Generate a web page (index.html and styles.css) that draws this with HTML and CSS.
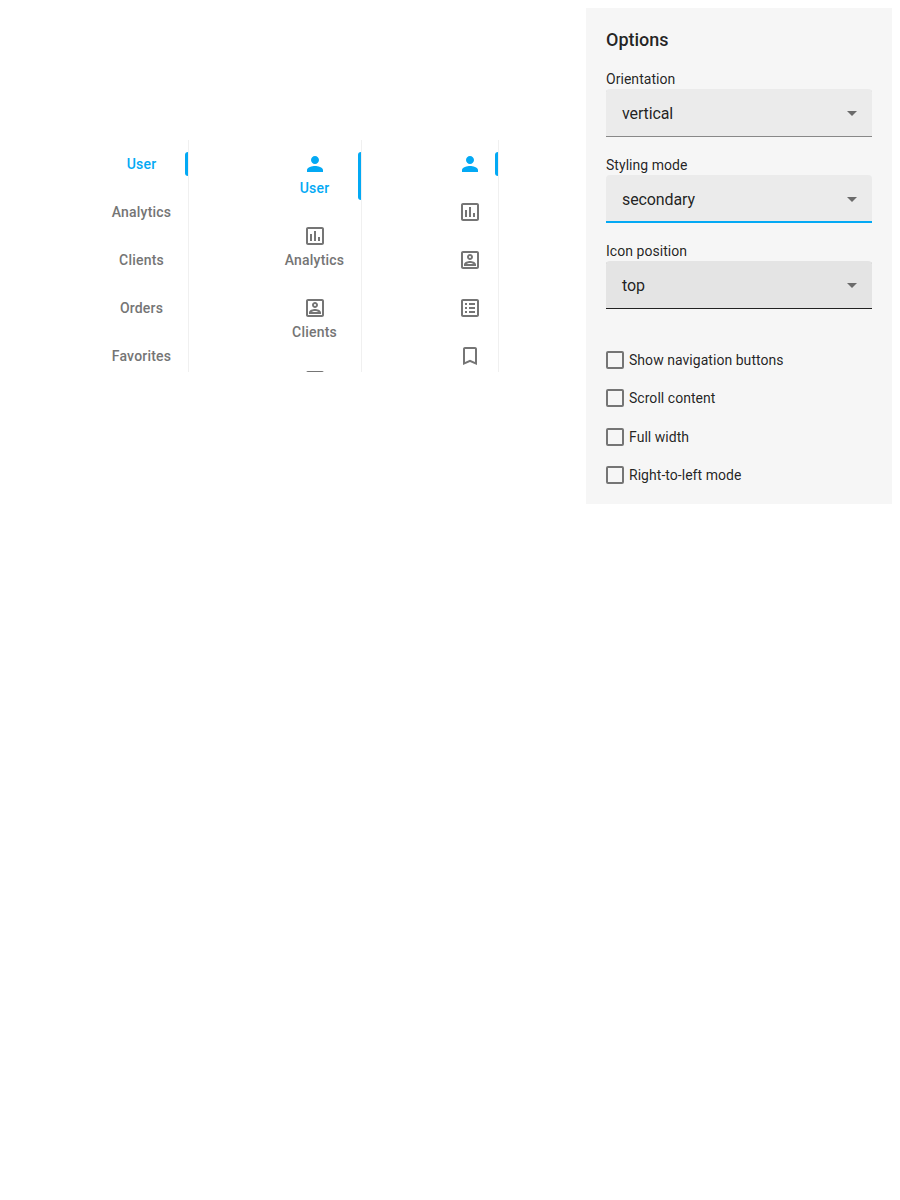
FILE: index.html
```html
<!DOCTYPE html>
<html lang="en">
<head>
<meta charset="utf-8">
<title>Tabs</title>
<link rel="stylesheet" href="styles.css">
</head>
<body>
<svg class="defs" width="0" height="0">
  <symbol id="user" viewBox="0 0 24 24"><path d="M12 12c2.21 0 4-1.79 4-4s-1.79-4-4-4-4 1.79-4 4 1.79 4 4 4zm0 2c-2.67 0-8 1.34-8 4v2h16v-2c0-2.66-5.33-4-8-4z"/></symbol>
  <symbol id="chart" viewBox="0 0 24 24"><path d="M19 3H5c-1.100 0-2 .9-2 2v14c0 1.100.9 2 2 2h14c1.100 0 2-.9 2-2V5c0-1.100-.9-2-2-2zm0 16H5V5h14v14zM7 10h2v7H7zm4-3h2v10h-2zm4 6h2v4h-2z"/></symbol>
  <symbol id="clients" viewBox="0 0 24 24"><path d="M19 3H5c-1.100 0-2 .9-2 2v14c0 1.100.9 2 2 2h14c1.100 0 2-.9 2-2V5c0-1.100-.9-2-2-2zm0 16H5V5h14v14zM12 12c1.650 0 3-1.350 3-3s-1.350-3-3-3-3 1.350-3 3 1.350 3 3 3zm0-4c.55 0 1 .45 1 1s-.45 1-1 1-1-.45-1-1 .45-1 1-1zM18 16.580c0-2.500-3.970-3.580-6-3.580s-6 1.080-6 3.580V18h12v-1.420zM8.480 16c.74-.51 2.230-1 3.520-1s2.780.49 3.520 1H8.480z"/></symbol>
  <symbol id="orders" viewBox="0 0 24 24"><path d="M19 3H5c-1.100 0-2 .9-2 2v14c0 1.100.9 2 2 2h14c1.100 0 2-.9 2-2V5c0-1.100-.9-2-2-2zm0 16H5V5h14v14zM11 7h6v2h-6zm0 4h6v2h-6zm0 4h6v2h-6zM7 7h2v2H7zm0 4h2v2H7zm0 4h2v2H7z"/></symbol>
  <symbol id="bookmark" viewBox="0 0 24 24"><path d="M17 3H7c-1.100 0-2 .9-2 2v16l7-3 7 3V5c0-1.100-.9-2-2-2zm0 15l-5-2.180L7 18V5h10v13z"/></symbol>
</svg>
<main class="demo">
  <div class="tabs tabs-text">
    <div class="tab selected"><span>User</span></div>
    <div class="tab"><span>Analytics</span></div>
    <div class="tab"><span>Clients</span></div>
    <div class="tab"><span>Orders</span></div>
    <div class="tab"><span>Favorites</span></div>
  </div>
  <div class="tabs tabs-both">
    <div class="tab selected"><svg class="icon"><use href="#user"/></svg><span>User</span></div>
    <div class="tab"><svg class="icon"><use href="#chart"/></svg><span>Analytics</span></div>
    <div class="tab"><svg class="icon"><use href="#clients"/></svg><span>Clients</span></div>
    <div class="tab"><svg class="icon"><use href="#orders"/></svg></div>
  </div>
  <div class="tabs tabs-icon">
    <div class="tab selected"><svg class="icon"><use href="#user"/></svg></div>
    <div class="tab"><svg class="icon"><use href="#chart"/></svg></div>
    <div class="tab"><svg class="icon"><use href="#clients"/></svg></div>
    <div class="tab"><svg class="icon"><use href="#orders"/></svg></div>
    <div class="tab"><svg class="icon"><use href="#bookmark"/></svg></div>
  </div>
</main>
<aside class="options">
  <div class="caption">Options</div>
  <div class="option">
    <div class="label">Orientation</div>
    <div class="select"><span>vertical</span><svg class="arrow" viewBox="0 0 10 5"><path d="M0 0h10L5 5z"/></svg></div>
  </div>
  <div class="option">
    <div class="label">Styling mode</div>
    <div class="select focused"><span>secondary</span><svg class="arrow" viewBox="0 0 10 5"><path d="M0 0h10L5 5z"/></svg></div>
  </div>
  <div class="option">
    <div class="label">Icon position</div>
    <div class="select hovered"><span>top</span><svg class="arrow" viewBox="0 0 10 5"><path d="M0 0h10L5 5z"/></svg></div>
  </div>
  <div class="checks">
    <div class="check"><i class="box"></i><span>Show navigation buttons</span></div>
    <div class="check"><i class="box"></i><span>Scroll content</span></div>
    <div class="check"><i class="box"></i><span>Full width</span></div>
    <div class="check"><i class="box"></i><span>Right-to-left mode</span></div>
  </div>
</aside>
</body>
</html>
```
FILE: styles.css
```css
* { box-sizing: border-box; }
body {
  margin: 8px;
  display: flex;
  justify-content: space-between;
  align-items: flex-start;
  background: #fff;
  color: rgba(0, 0, 0, .87);
  font: 14px/18px Roboto, sans-serif;
}
.defs { position: absolute; }
.demo { display: flex; padding: 132px 0 0 87px; }
.tabs {
  height: 232px;
  overflow: hidden;
  box-shadow: inset -1px 0 #f0f0f0;
  font-weight: 500;
  line-height: 24px;
  letter-spacing: .2px;
  color: #757575;
}
.tabs-text { width: 94px; margin-right: 79px; }
.tabs-both { width: 94px; margin-right: 80px; }
.tabs-icon { width: 57px; }
.tab {
  position: relative;
  display: flex;
  flex-direction: column;
  align-items: center;
  padding: 12px 0;
}
.tab span { margin-right: 1px; }
.tabs-icon .tab { padding-right: 1px; }
.selected { color: #03a9f4; }
.selected::after {
  content: "";
  position: absolute;
  top: 12px;
  bottom: 12px;
  right: 1px;
  width: 3px;
  border-radius: 3px 0 0 3px;
  background: #03a9f4;
}
.icon { width: 24px; height: 24px; fill: currentColor; }
.options {
  width: 306px;
  height: 496px;
  padding: 20px;
  background: #f6f6f6;
}
.caption { font-size: 18px; font-weight: 500; line-height: 24px; }
.option { margin-top: 19px; }
.caption + .option { margin-top: 18px; }
.label { height: 19px; letter-spacing: .04px; }
.select {
  display: flex;
  align-items: center;
  justify-content: space-between;
  height: 48px;
  padding: 1px 15px 0 16px;
  border-radius: 4px 4px 0 0;
  background: #ebebeb;
  box-shadow: inset 0 -1px #888;
  font-size: 16px;
  letter-spacing: -.12px;
}
.focused { box-shadow: inset 0 -2px #03a9f4; }
.hovered { background: #e4e4e4; box-shadow: inset 0 -1px #212121; }
.arrow { width: 10px; height: 5px; fill: #6b6b6b; }
.checks { display: flex; flex-direction: column; gap: 20.4px; margin-top: 42px; }
.check { display: flex; align-items: center; gap: 5px; height: 18px; letter-spacing: .04px; }
.box { width: 18px; height: 18px; border: 2px solid #757575; border-radius: 2px; }
```
